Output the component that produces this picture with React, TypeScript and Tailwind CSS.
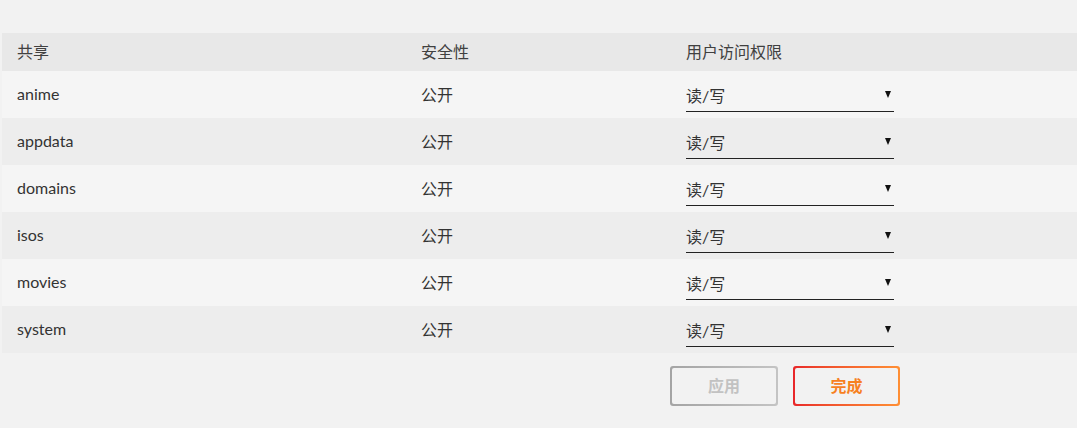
import React, { useState } from "react";

const shares = ["anime", "appdata", "domains", "isos", "movies", "system"];

export default function App() {
  const [perms, setPerms] = useState<Record<string, string>>(
    Object.fromEntries(shares.map((s) => [s, "rw"]))
  );

  return (
    <div
      className="w-[1077px] h-[428px] bg-[#f2f2f2] pt-[33px] pl-[2px] text-[#333]"
      style={{ fontFamily: 'Lato, "Noto Sans CJK SC", sans-serif' }}
    >
      {/* header */}
      <div className="flex h-[38px] items-center bg-[#e8e8e8] text-[16px] text-[#404040]">
        <div className="w-[404px] pl-[15px]">共享</div>
        <div className="w-[265px] pl-[15px]">安全性</div>
        <div className="pl-[15px]">用户访问权限</div>
      </div>

      {shares.map((name, i) => (
        <div
          key={name}
          className={
            "flex h-[47px] items-center text-[16px] " +
            (i % 2 === 0 ? "bg-[#f5f5f5]" : "bg-[#ededed]")
          }
        >
          <div className="w-[404px] pl-[15px] -mt-[2px]">{name}</div>
          <div className="w-[265px] pl-[15px]">公开</div>
          <div className="pl-[15px] h-full flex items-end pb-[6px]">
            <div className="relative w-[208px] border-b border-[#222]">
              <select
                value={perms[name]}
                onChange={(e) => setPerms({ ...perms, [name]: e.target.value })}
                className="w-full appearance-none bg-transparent outline-none h-[31px] text-[16px] text-[#333]"
              >
                <option value="rw">读/写</option>
                <option value="r">只读</option>
                <option value="no">拒绝访问</option>
              </select>
              <svg
                className="pointer-events-none absolute right-[3px] top-[11px]"
                width="6"
                height="7"
                viewBox="0 0 6 7"
              >
                <path d="M0 0 H6 L3 7 Z" fill="#111" />
              </svg>
            </div>
          </div>
        </div>
      ))}

      <div className="flex gap-[15px] pl-[668px] pt-[13px]">
        <button className="w-[108px] h-[40px] rounded-[3px] p-[2px] bg-gradient-to-r from-[#a4a4a4] to-[#c4c4c4]">
          <span className="flex h-full w-full items-center justify-center rounded-[2px] bg-[#f2f2f2] text-[16px] font-bold text-[#c2c2c2]">
            应用
          </span>
        </button>
        <button className="w-[107px] h-[40px] rounded-[3px] p-[2px] bg-gradient-to-r from-[#e8262a] to-[#ff8f34]">
          <span className="flex h-full w-full items-center justify-center rounded-[2px] bg-[#f2f2f2] text-[16px] font-bold text-[#f7811f]">
            完成
          </span>
        </button>
      </div>
    </div>
  );
}
